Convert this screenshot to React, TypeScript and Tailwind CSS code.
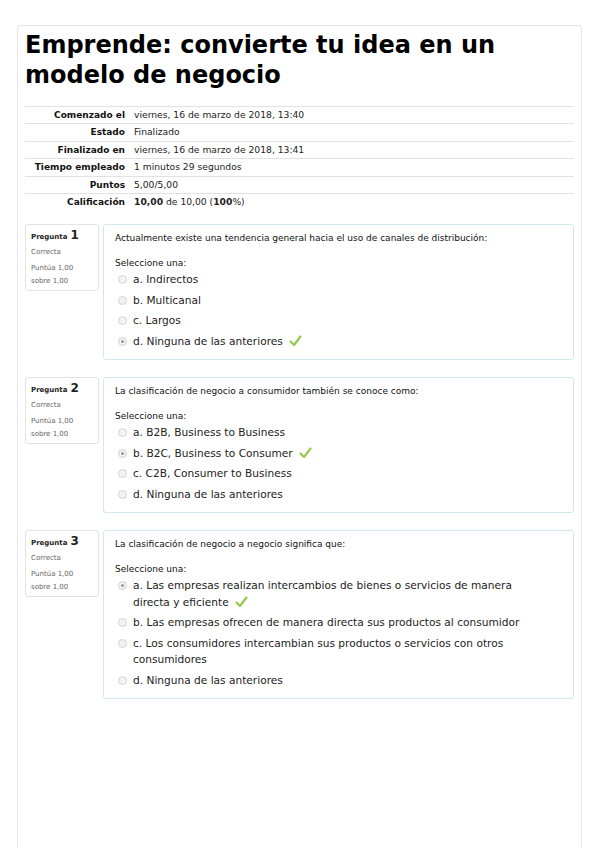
import React from "react";

const font = { fontFamily: '"DejaVu Sans", Verdana, sans-serif' };

function Radio({ checked }: { checked?: boolean }) {
  return (
    <span className="mt-[4px] flex h-[9px] w-[9px] shrink-0 items-center justify-center rounded-full border border-[#d4d4d4] bg-[#f3f3f3]">
      {checked && <span className="h-[3px] w-[3px] rounded-full bg-[#9a9a9a]" />}
    </span>
  );
}

function Check() {
  return (
    <svg className="ml-[6px] inline-block align-[-2px]" width="13" height="12" viewBox="0 0 13 12">
      <path d="M1.5 6.5 L5 10 L11.5 1.5" fill="none" stroke="#93cb4c" strokeWidth="2.2" strokeLinecap="round" strokeLinejoin="round" />
    </svg>
  );
}

type Opt = { text: string; checked?: boolean; correct?: boolean };

function Question({ n, q, opts }: { n: number; q: string; opts: Opt[] }) {
  return (
    <div className="flex gap-[4px]">
      <div className="h-[67px] w-[74px] shrink-0 rounded-[3px] border border-[#e3e3e3] bg-white px-[5px] pt-[4px] leading-none">
        <div className="flex items-baseline gap-[3px]">
          <span className="text-[7px] font-bold text-[#222]">Pregunta</span>
          <span className="text-[12px] font-bold text-[#222]">{n}</span>
        </div>
        <div className="mt-[8px] text-[7px] text-[#666]">Correcta</div>
        <div className="mt-[6px] text-[7px] leading-[13px] text-[#666]">
          Puntúa 1,00
          <br />
          sobre 1,00
        </div>
      </div>
      <div className="flex-1 rounded-[3px] border border-[#cfe9f1] pb-[10px] pl-[11px] pr-[46px] pt-[7px]">
        <div className="text-[9px] leading-[12px] text-[#111]">{q}</div>
        <div className="mt-[13px] text-[9px] leading-[12px] text-[#111]">Seleccione una:</div>
        <div className="mt-[2px] flex flex-col gap-[4px] pl-[3px]">
          {opts.map((o, i) => (
            <div key={i} className="flex items-start gap-[6px]">
              <Radio checked={o.checked} />
              <div className="text-[10.6px] leading-[16.5px] text-[#222]">
                {o.text}
                {o.correct && <Check />}
              </div>
            </div>
          ))}
        </div>
      </div>
    </div>
  );
}

export default function App() {
  const rows: [string, React.ReactNode][] = [
    ["Comenzado el", "viernes, 16 de marzo de 2018, 13:40"],
    ["Estado", "Finalizado"],
    ["Finalizado en", "viernes, 16 de marzo de 2018, 13:41"],
    ["Tiempo empleado", "1 minutos 29 segundos"],
    ["Puntos", "5,00/5,00"],
    [
      "Calificación",
      <>
        <b>10,00</b> de 10,00 (<b>100</b>%)
      </>,
    ],
  ];
  return (
    <div className="min-h-[848px] bg-white pt-[25px]" style={font}>
      <div className="mx-[17px] h-[840px] rounded-t-[4px] border border-b-0 border-[#e6e6e6] px-[7px]">
        <h1 className="pt-[4px] text-[24px] font-bold leading-[30px] text-black">
          Emprende: convierte tu idea en un modelo de negocio
        </h1>
        <table className="mt-[16px] w-full border-collapse">
          <tbody>
            {rows.map(([k, v], i) => (
              <tr key={i} className="border-t border-[#e2e2e2]">
                <th className="w-[109px] pr-[9px] text-right text-[9px] font-bold leading-[16.4px] text-[#111]">{k}</th>
                <td className="text-[9.2px] leading-[16.4px] text-[#222]">{v}</td>
              </tr>
            ))}
          </tbody>
        </table>
        <div className="mt-[14px] flex flex-col gap-[17px]">
          <Question
            n={1}
            q="Actualmente existe una tendencia general hacia el uso de canales de distribución:"
            opts={[
              { text: "a. Indirectos" },
              { text: "b. Multicanal" },
              { text: "c. Largos" },
              { text: "d. Ninguna de las anteriores", checked: true, correct: true },
            ]}
          />
          <Question
            n={2}
            q="La clasificación de negocio a consumidor también se conoce como:"
            opts={[
              { text: "a. B2B, Business to Business" },
              { text: "b. B2C, Business to Consumer", checked: true, correct: true },
              { text: "c. C2B, Consumer to Business" },
              { text: "d. Ninguna de las anteriores" },
            ]}
          />
          <Question
            n={3}
            q="La clasificación de negocio a negocio significa que:"
            opts={[
              { text: "a. Las empresas realizan intercambios de bienes o servicios de manera directa y eficiente", checked: true, correct: true },
              { text: "b. Las empresas ofrecen de manera directa sus productos al consumidor" },
              { text: "c. Los consumidores intercambian sus productos o servicios con otros consumidores" },
              { text: "d. Ninguna de las anteriores" },
            ]}
          />
        </div>
      </div>
    </div>
  );
}
